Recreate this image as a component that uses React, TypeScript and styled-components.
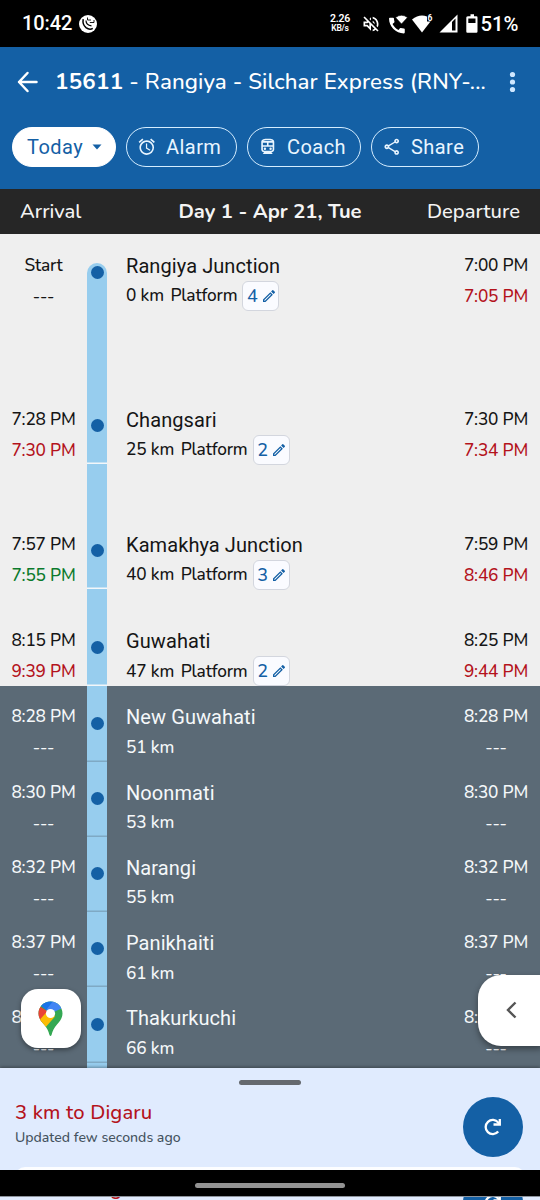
import React from "react";
import styled, { createGlobalStyle } from "styled-components";
import {
  MdAccessAlarm,
  MdCall,
  MdOutlineDirectionsTransit,
  MdOutlineShare,
  MdOutlineModeEdit,
  MdOutlineVolumeOff,
} from "react-icons/md";

const humanist = `"Nunito", "Noto Sans", sans-serif`;
const BLUE = "#1460a5";

const GlobalStyle = createGlobalStyle`
  * { box-sizing: border-box; }
  body { margin: 0; background: #000; }
`;

const Screen = styled.div`
  position: relative;
  width: 540px;
  height: 1200px;
  overflow: hidden;
  display: flex;
  flex-direction: column;
  font-family: ${humanist};
  font-weight: 500;
  background: #efefef;
`;

const StatusBar = styled.header`
  height: 47px;
  flex: none;
  display: flex;
  align-items: center;
  padding: 0 22px;
  background: #000;
  color: #fff;
  font: 500 20px/47px Roboto, sans-serif;
  svg { flex: none; display: block; }
`;
const Clock = styled.span`
  width: 57px;
  letter-spacing: -0.1px;
`;
const StatusIcons = styled.div`
  display: flex;
  align-items: center;
  margin-left: auto;
  margin-right: -1px;
`;
const NetSpeed = styled.div`
  width: 24px;
  margin-right: 9px;
  text-align: center;
  font: 600 10.5px/10px Roboto, sans-serif;
  letter-spacing: -0.2px;
  small { display: block; font-size: 8.5px; line-height: 9px; }
`;

const AppBar = styled.div`
  height: 141.5px;
  flex: none;
  background: ${BLUE};
  color: #fff;
`;
const TitleRow = styled.div`
  height: 70px;
  display: flex;
  align-items: center;
  padding: 0 19px 0 17px;
`;
const Title = styled.h1`
  margin: 0 0 0 17px;
  flex: 1;
  white-space: nowrap;
  font-size: 22.3px;
  line-height: 30px;
  font-weight: 500;
  letter-spacing: 0.1px;
  b { font-weight: 700; letter-spacing: 0.3px; }
`;
const Chips = styled.div`
  display: flex;
  gap: 10px;
  padding: 9.5px 12px 0;
`;
const Chip = styled.button<{ $width: number; $filled?: boolean }>`
  width: ${(p) => p.$width}px;
  height: 40px;
  display: flex;
  align-items: center;
  padding: 0 0 0 ${(p) => (p.$filled ? 14 : 10)}px;
  gap: ${(p) => (p.$filled ? 9 : 9.5)}px;
  border: 1.5px solid ${(p) => (p.$filled ? "#fff" : "#d4edff")};
  border-radius: 20px;
  background: ${(p) => (p.$filled ? "#fff" : "transparent")};
  color: ${(p) => (p.$filled ? BLUE : "#e9f5ff")};
  font: 400 20px/24px Roboto, sans-serif;
  letter-spacing: 0.45px;
  svg { flex: none; }
`;

const ColumnHeads = styled.div`
  height: 45px;
  flex: none;
  display: grid;
  grid-template-columns: 126px 1fr 126px;
  align-items: center;
  padding: 1px 20px 0;
  background: #262626;
  color: #f4f4f4;
`;
const HeadCell = styled.span<{ $align: string; $strong?: boolean }>`
  text-align: ${(p) => p.$align};
  font-weight: ${(p) => (p.$strong ? 700 : 500)};
  font-size: 20.2px;
  white-space: nowrap;
`;

const Timeline = styled.main`
  height: 834px;
  flex: none;
  overflow: hidden;
  background: #5b6a76;
`;
const StopRow = styled.section<{ $height: number; $ahead?: boolean }>`
  height: ${(p) => p.$height}px;
  display: grid;
  grid-template-columns: 87px 20px 1fr 88px;
  background: ${(p) => (p.$ahead ? "#5b6a76" : "#efefef")};
  color: ${(p) => (p.$ahead ? "#f5f8fa" : "#151515")};
`;
const Times = styled.div`
  align-self: end;
  height: 75.2px;
  padding-top: 15px;
  text-align: center;
  font-size: 17.3px;
  line-height: 31px;
  letter-spacing: -0.2px;
`;
const Time = styled.div<{ $tone?: string }>`
  color: ${(p) => p.$tone || "inherit"};
  white-space: nowrap;
`;
const Rail = styled.div<{ $first?: boolean; $line: string }>`
  display: flex;
  align-items: flex-end;
  justify-content: center;
  margin-top: ${(p) => (p.$first ? 29 : 0)}px;
  padding-bottom: ${(p) => (p.$first ? 31 : 32)}px;
  border-radius: ${(p) => (p.$first ? "10px 10px 0 0" : "0")};
  background: #97cdee;
  box-shadow: inset 0 -1.5px ${(p) => p.$line};
`;
const Dot = styled.i`
  width: 13px;
  height: 13px;
  border-radius: 50%;
  background: ${BLUE};
`;
const Place = styled.div`
  align-self: end;
  height: 75.2px;
  padding: 16px 0 0 19px;
`;
const Name = styled.div`
  height: 30px;
  font: 400 20px/31px Roboto, sans-serif;
  letter-spacing: 0.08px;
  white-space: nowrap;
`;
const Meta = styled.div`
  height: 30px;
  display: flex;
  align-items: center;
  font-size: 17.3px;
  letter-spacing: -0.15px;
  white-space: nowrap;
`;
const PlatformLabel = styled.span`
  margin: 0 5px 0 6.5px;
  letter-spacing: -0.15px;
`;
const PlatformTag = styled.span`
  width: 37px;
  height: 30px;
  display: flex;
  align-items: center;
  justify-content: center;
  gap: 3px;
  border: 1.5px solid #d3d6de;
  border-radius: 6px;
  background: #fafbff;
  color: ${BLUE};
  font-size: 18px;
  svg { margin-right: -2px; }
`;

const MapsButton = styled.button`
  position: absolute;
  left: 20.5px;
  top: 989px;
  width: 60px;
  height: 59px;
  display: grid;
  place-items: center;
  padding: 0;
  border: 0;
  border-radius: 17px;
  background: #fff;
  box-shadow: 0 2px 5px rgba(0, 0, 0, 0.4);
`;
const DrawerHandle = styled.button`
  position: absolute;
  left: 477.5px;
  top: 974.5px;
  width: 64px;
  height: 71px;
  padding: 0 0 0 27.5px;
  display: flex;
  align-items: center;
  border: 0;
  border-radius: 23px 0 0 23px;
  background: #fff;
  box-shadow: 0 3px 6px rgba(0, 0, 0, 0.4);
`;

const Sheet = styled.footer`
  height: 102.5px;
  flex: none;
  display: flex;
  flex-direction: column;
  align-items: center;
  overflow: hidden;
  background: #e0ebfe;
  box-shadow: 0 -1px 3px rgba(0, 0, 0, 0.35);
  z-index: 1;
`;
const Grip = styled.i`
  flex: none;
  width: 62px;
  height: 5px;
  margin-top: 12.5px;
  border-radius: 3px;
  background: #65696f;
`;
const Summary = styled.div`
  flex: none;
  width: 100%;
  height: 81.5px;
  padding: 12px 17.5px 0 15px;
  display: flex;
  justify-content: space-between;
`;
const NextStop = styled.div`
  height: 31px;
  color: #b4131c;
  font-size: 20.2px;
  line-height: 31px;
  letter-spacing: 0.15px;
`;
const Updated = styled.div`
  color: #45535f;
  font-size: 14.1px;
  line-height: 20px;
`;
const Refresh = styled.button`
  width: 60px;
  height: 60px;
  display: grid;
  place-items: center;
  padding: 0;
  border: 0;
  border-radius: 50%;
  background: ${BLUE};
`;
const CardEdge = styled.div`
  flex: none;
  width: 510px;
  height: 20px;
  border-radius: 10px 10px 0 0;
  background: #fcfdff;
`;
const NavBar = styled.nav`
  height: 26px;
  flex: none;
  display: flex;
  align-items: center;
  justify-content: center;
  padding-top: 4px;
  background: #000;
  z-index: 2;
`;
const Pill = styled.i`
  width: 150px;
  height: 5px;
  border-radius: 3px;
  background: #929292;
`;
const BottomSliver = styled.div`
  flex: none;
  height: 4px;
  overflow: hidden;
  border-top: 1px solid #8d939b;
  background: #e0ebfe;
`;
const SliverContent = styled.div`
  margin-top: -36px;
`;

type Stop = {
  name: string; km: number; arr: string; arr2: string; dep: string; dep2: string;
  h: number; platform?: number; early?: boolean;
};

const stops: Stop[] = [
  { name: "Rangiya Junction", km: 0, arr: "Start", arr2: "---", dep: "7:00 PM", dep2: "7:05 PM", h: 76.5, platform: 4 },
  { name: "Changsari", km: 25, arr: "7:28 PM", arr2: "7:30 PM", dep: "7:30 PM", dep2: "7:34 PM", h: 154, platform: 2 },
  { name: "Kamakhya Junction", km: 40, arr: "7:57 PM", arr2: "7:55 PM", dep: "7:59 PM", dep2: "8:46 PM", h: 125, platform: 3, early: true },
  { name: "Guwahati", km: 47, arr: "8:15 PM", arr2: "9:39 PM", dep: "8:25 PM", dep2: "9:44 PM", h: 96.5, platform: 2 },
  ...([
    ["New Guwahati", 51, "8:28 PM", 76.1],
    ["Noonmati", 53, "8:30 PM", 75.25],
    ["Narangi", 55, "8:32 PM", 75.25],
    ["Panikhaiti", 61, "8:37 PM", 75.25],
    ["Thakurkuchi", 66, "8:42 PM", 75.25],
  ] as [string, number, string, number][]).map(([name, km, t, h]) => ({
    name, km, arr: t, arr2: "---", dep: t, dep2: "---", h,
  })),
];

const toneOf = (value: string, early?: boolean) =>
  value === "---" ? undefined : early ? "#0b7a2c" : "#b4131c";

function StopItem({ stop, first }: { stop: Stop; first: boolean }) {
  const ahead = stop.platform === undefined;
  const line = first ? "transparent" : ahead ? "#7fa9c4" : "#f3f7fa";
  return (
    <StopRow $height={stop.h} $ahead={ahead}>
      <Times>
        <Time>{stop.arr}</Time>
        <Time $tone={toneOf(stop.arr2, stop.early)}>{stop.arr2}</Time>
      </Times>
      <Rail $first={first} $line={line}><Dot /></Rail>
      <Place>
        <Name>{stop.name}</Name>
        <Meta>
          {stop.km} km
          {!ahead && (
            <>
              <PlatformLabel>Platform</PlatformLabel>
              <PlatformTag>{stop.platform}<MdOutlineModeEdit size={16} /></PlatformTag>
            </>
          )}
        </Meta>
      </Place>
      <Times>
        <Time>{stop.dep}</Time>
        <Time $tone={toneOf(stop.dep2)}>{stop.dep2}</Time>
      </Times>
    </StopRow>
  );
}

function SummaryContent() {
  return (
    <Summary>
      <div>
        <NextStop>3 km to Digaru</NextStop>
        <Updated>Updated few seconds ago</Updated>
      </div>
      <Refresh aria-label="Refresh">
        <svg width="20" height="20" viewBox="0 0 20 20" fill="none" stroke="#fff" strokeWidth="2.3">
          <path d="M15.2 14.6A7.1 7.1 0 1 1 15.3 5.6L16.5 7.4" />
          <path d="M16.8 2V7.5H10.5" />
        </svg>
      </Refresh>
    </Summary>
  );
}

export default function App() {
  return (
    <>
      <GlobalStyle />
      <Screen>
        <StatusBar>
          <Clock>10:42</Clock>
          <svg width="18" height="18" viewBox="0 0 18 18">
            <circle cx="9" cy="9" r="9" fill="#fff" />
            <path d="M4.2 4.2Q3.2 9.5 7 12.6 10.5 15.3 13.8 13.4" fill="none" stroke="#000" strokeWidth="1.5" />
            <path d="M7 5.500Q7 10 12.500 10.800" fill="none" stroke="#000" strokeWidth="1.2" />
            <path d="M8.500 2.500V5H12M10.800 7.500H15V5" fill="none" stroke="#000" strokeWidth="0.9" />
          </svg>
          <StatusIcons>
            <NetSpeed>2.26<small>KB/s</small></NetSpeed>
            <svg width="158" height="22" viewBox="0 0 158 22">
              <MdOutlineVolumeOff x={0} y={1} size={20} />
              <MdCall x={25.4} y={2} size={21} />
              <path d="M34.5 4.5Q40.5 0 46.5 4.5L40.5 11Z" fill="#fff" stroke="#000" strokeWidth="0.6" />
              <path d="M51 6.5Q61-1.5 71 6.5L61 19.5Z" fill="#fff" />
              <path d="M66 0H73V8.500H66Z" fill="#000" />
              <text x="66.5" y="7.5" fill="#fff" fontFamily="Roboto" fontWeight="700" fontSize="8.5">6</text>
              <path d="M78.5 19.5 96.5 1.5V19.5Z" fill="#fff" />
              <path d="M91 9 94.5 5.5V17.5H91Z" fill="#000" />
              <path d="M107.5 3.2H109.5V1.2H113V3.2H115.5Q116.5 3.2 116.5 4.5V18.5Q116.5 19.8 115.3 19.8H106.3Q105.3 19.8 105.3 18.5V4.5Q105.3 3.2 107.5 3.2Z" fill="#fff" />
              <path d="M107.3 5.5H114.5V10H107.3Z" fill="#000" />
              <text x="119.5" y="18" fill="#fff" fontFamily="Roboto" fontWeight="500" fontSize="20.3">51%</text>
            </svg>
          </StatusIcons>
        </StatusBar>

        <AppBar>
          <TitleRow>
            <svg width="21" height="22" viewBox="0 0 21 22" fill="none" stroke="#fff" strokeWidth="2.5" strokeLinejoin="round" strokeLinecap="round">
              <path d="M19.5 11H2M10.5 2 2 11 10.5 20" />
            </svg>
            <Title><b>15611</b> - Rangiya - Silchar Express (RNY-...</Title>
            <svg width="16" height="22" viewBox="0 0 16 22" fill="#cfe7ff">
              <circle cx="7.5" cy="3.5" r="2.6" />
              <circle cx="7.5" cy="11" r="2.6" />
              <circle cx="7.5" cy="18.5" r="2.6" />
            </svg>
          </TitleRow>
          <Chips>
            <Chip $width={104} $filled>
              Today
              <svg width="10" height="6" viewBox="0 0 10 6" fill={BLUE}><path d="M.5.5H9.5L5 5.500Z" /></svg>
            </Chip>
            <Chip $width={111}><MdAccessAlarm size={19.5} />Alarm</Chip>
            <Chip $width={114}><MdOutlineDirectionsTransit size={19.5} />Coach</Chip>
            <Chip $width={108}><MdOutlineShare size={19.5} />Share</Chip>
          </Chips>
        </AppBar>

        <ColumnHeads>
          <HeadCell $align="left">Arrival</HeadCell>
          <HeadCell $align="center" $strong>Day 1 - Apr 21, Tue</HeadCell>
          <HeadCell $align="right">Departure</HeadCell>
        </ColumnHeads>

        <Timeline>
          {stops.map((stop, i) => <StopItem key={stop.name} stop={stop} first={i === 0} />)}
          <StopRow $height={20} $ahead>
            <span />
            <Rail $line="transparent" />
          </StopRow>
        </Timeline>

        <Sheet>
          <Grip />
          <SummaryContent />
          <CardEdge />
        </Sheet>
        <NavBar><Pill /></NavBar>
        <BottomSliver>
          <SliverContent><SummaryContent /></SliverContent>
        </BottomSliver>

        <MapsButton aria-label="Open map">
          <svg width="25" height="36" viewBox="0 0 25 36">
            <defs>
              <clipPath id="pin">
                <path d="M12.5.5C5.5.5.5 6 .5 12.5 .5 17 3 20 6 23.5 9 27 10.5 30 11.3 33.5Q12.5 36.5 13.7 33.5C14.5 30 16 27 19 23.5 22 20 24.5 17 24.5 12.5 24.5 6 19.5.5 12.5.5Z" />
              </clipPath>
            </defs>
            <g clipPath="url(#pin)">
              <path d="M0 0H25V36H0Z" fill="#34a853" />
              <path d="M-2 3 12.5 12.3 2 24-3 20Z" fill="#ea4335" />
              <path d="M1.5 19 11 8.5 17 15.5 6.5 27.5Z" fill="#fbbc04" />
              <path d="M2.5 4.5 12.5 12.5 17-1H3Z" fill="#1a73e8" />
              <path d="M16-1 8.5 8.5 12.5 12.5 23.5 7.5 25-1Z" fill="#4285f4" />
            </g>
            <circle cx="12.5" cy="12.5" r="4.6" fill="#fff" />
          </svg>
        </MapsButton>
        <DrawerHandle aria-label="Open drawer">
          <svg width="12" height="18" viewBox="0 0 12 18" fill="none" stroke="#555" strokeWidth="2.4">
            <path d="M10.5 1.5 3 9 10.5 16.5" />
          </svg>
        </DrawerHandle>
      </Screen>
    </>
  );
}
